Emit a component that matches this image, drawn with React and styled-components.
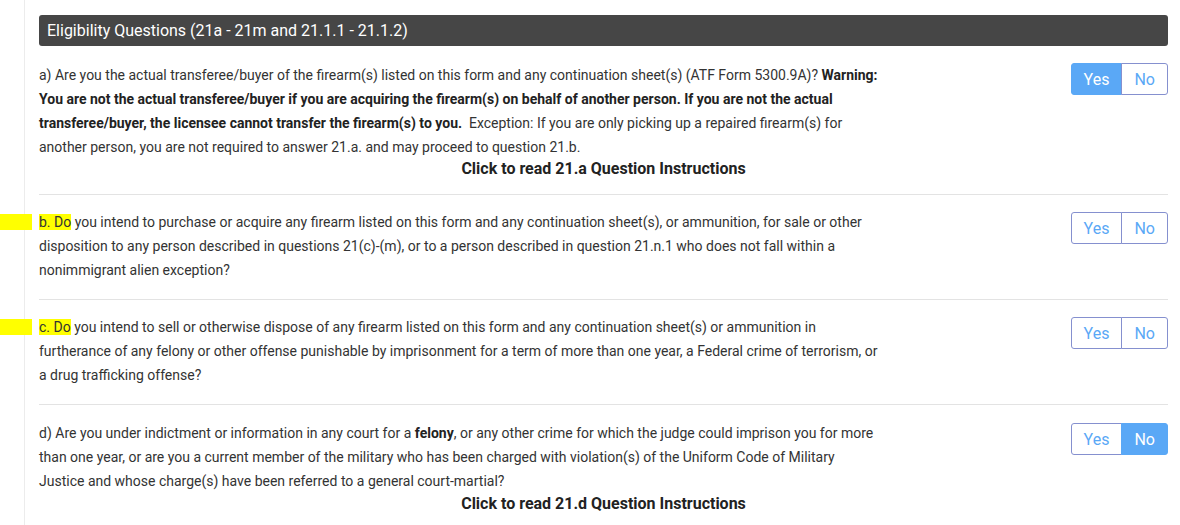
import React, { useState } from 'react';
import styled, { createGlobalStyle } from 'styled-components';

const GlobalStyle = createGlobalStyle`
  html, body {
    margin: 0;
    padding: 0;
    background: #fff;
  }
  body {
    font-family: Roboto, "Liberation Sans", Arial, sans-serif;
    color: #333;
  }
`;

const Page = styled.div`
  padding: 0 12px 0 24px;
`;

const Panel = styled.div`
  border-left: 1px solid #ececec;
  padding: 15px 0 0 14px;
  min-height: 525px;
  box-sizing: border-box;
`;

const Header = styled.div`
  background: #464646;
  color: #fff;
  font-size: 16px;
  line-height: 31px;
  height: 31px;
  padding-left: 8px;
  border-radius: 3px;
`;

const Question = styled.div`
  padding: ${(p) => (p.$first ? '17px' : p.$last ? '16px' : '15px')} 0 ${(p) => (p.$link ? '15px' : '17px')};
  border-bottom: ${(p) => (p.$last ? 'none' : '1px solid #e3e3e3')};
`;

const Row = styled.div`
  display: flex;
  justify-content: space-between;
  align-items: flex-start;
`;

const Text = styled.p`
  margin: 0;
  width: 841px;
  font-size: 14px;
  line-height: 24px;
  color: #333;

  b {
    font-weight: 700;
    color: #222;
  }
`;

const Mark = styled.span`
  background: #ffff00;
  box-shadow: -39px 0 0 #ffff00;
`;

const Toggle = styled.div`
  display: inline-flex;
  flex-shrink: 0;
  margin-top: ${(p) => (p.$offset ? '2px' : '0')};
`;

const ToggleButton = styled.button`
  height: 32px;
  padding: 0 12px;
  font-family: Roboto, "Liberation Sans", Arial, sans-serif;
  font-size: 16px;
  cursor: pointer;
  border: 1px solid ${(p) => (p.$active ? '#5aa8f6' : '#8590cf')};
  background: ${(p) => (p.$active ? '#5aa8f6' : '#fff')};
  color: ${(p) => (p.$active ? '#fff' : '#5aa8f6')};

  &:first-child {
    border-radius: 3px 0 0 3px;
  }
  &:last-child {
    border-radius: 0 3px 3px 0;
    margin-left: -1px;
  }
`;

const InstructionsLink = styled.div`
  text-align: center;
  font-size: 16px;
  font-weight: 700;
  line-height: 20px;
  margin-top: ${(p) => (p.$gap ? '1px' : '0')};
  color: #222;
  cursor: pointer;
`;

function YesNo({ value, onChange, offset }) {
  return (
    <Toggle $offset={offset}>
      <ToggleButton $active={value === 'yes'} onClick={() => onChange('yes')}>Yes</ToggleButton>
      <ToggleButton $active={value === 'no'} onClick={() => onChange('no')}>No</ToggleButton>
    </Toggle>
  );
}

export default function App() {
  const [answers, setAnswers] = useState({ a: 'yes', b: null, c: null, d: 'no' });
  const set = (key) => (v) => setAnswers({ ...answers, [key]: v });

  return (
    <>
      <GlobalStyle />
      <Page>
        <Panel>
          <Header>Eligibility Questions (21a - 21m and 21.1.1 - 21.1.2)</Header>

          <Question $first $link>
            <Row>
              <Text>
                a) Are you the actual transferee/buyer of the firearm(s) listed on this form and any continuation sheet(s) (ATF Form 5300.9A)? <b>Warning: You are not the actual transferee/buyer if you are acquiring the firearm(s) on behalf of another person. If you are not the actual transferee/buyer, the licensee cannot transfer the firearm(s) to you.</b>&nbsp; Exception: If you are only picking up a repaired firearm(s) for another person, you are not required to answer 21.a. and may proceed to question 21.b.
              </Text>
              <YesNo value={answers.a} onChange={set('a')} />
            </Row>
            <InstructionsLink>Click to read 21.a Question Instructions</InstructionsLink>
          </Question>

          <Question>
            <Row>
              <Text>
                <Mark>b. Do</Mark> you intend to purchase or acquire any firearm listed on this form and any continuation sheet(s), or ammunition, for sale or other disposition to any person described in questions 21(c)-(m), or to a person described in question 21.n.1 who does not fall within a nonimmigrant alien exception?
              </Text>
              <YesNo value={answers.b} onChange={set('b')} offset />
            </Row>
          </Question>

          <Question>
            <Row>
              <Text>
                <Mark>c. Do</Mark> you intend to sell or otherwise dispose of any firearm listed on this form and any continuation sheet(s) or ammunition in furtherance of any felony or other offense punishable by imprisonment for a term of more than one year, a Federal crime of terrorism, or a drug trafficking offense?
              </Text>
              <YesNo value={answers.c} onChange={set('c')} offset />
            </Row>
          </Question>

          <Question $last $link>
            <Row>
              <Text>
                d) Are you under indictment or information in any court for a <b>felony</b>, or any other crime for which the judge could imprison you for more than one year, or are you a current member of the military who has been charged with violation(s) of the Uniform Code of Military Justice and whose charge(s) have been referred to a general court-martial?
              </Text>
              <YesNo value={answers.d} onChange={set('d')} offset />
            </Row>
            <InstructionsLink $gap>Click to read 21.d Question Instructions</InstructionsLink>
          </Question>
        </Panel>
      </Page>
    </>
  );
}
